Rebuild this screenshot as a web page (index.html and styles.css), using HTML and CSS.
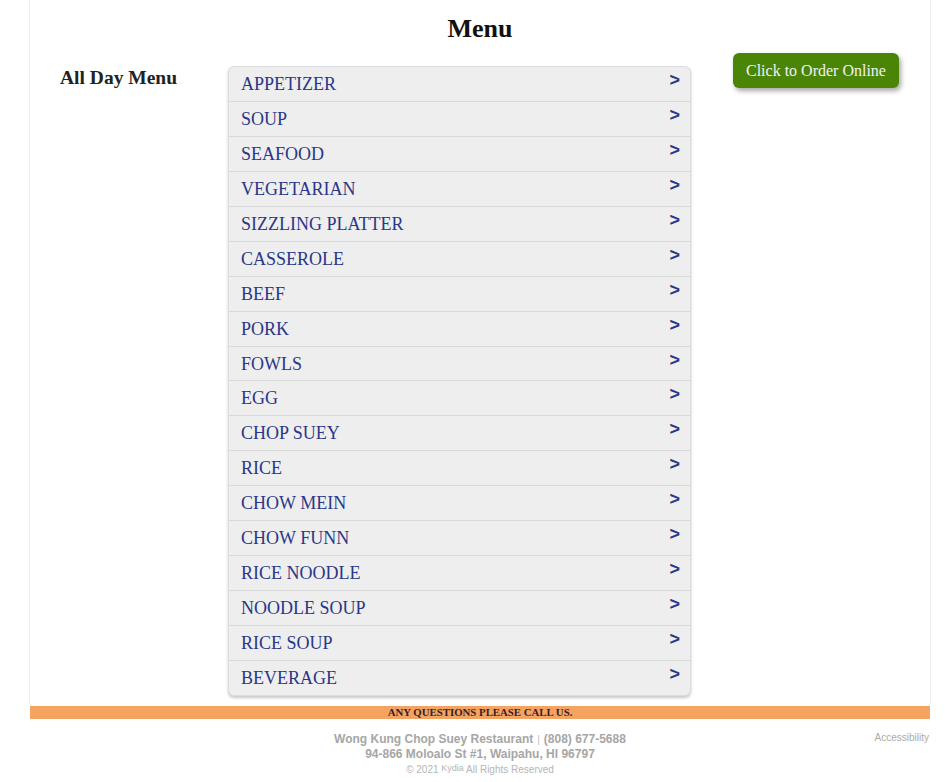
FILE: index.html
```html
<!DOCTYPE html>
<html>
<head>
<meta charset="utf-8">
<link rel="stylesheet" href="styles.css">
</head>
<body>
<div class="page">
  <h1 class="title">Menu</h1>
  <div class="main">
    <h2 class="side-title">All Day Menu</h2>
    <ul class="menu-list">
      <li class="menu-item"><span class="name">APPETIZER</span><span class="arrow">&gt;</span></li>
      <li class="menu-item"><span class="name">SOUP</span><span class="arrow">&gt;</span></li>
      <li class="menu-item"><span class="name">SEAFOOD</span><span class="arrow">&gt;</span></li>
      <li class="menu-item"><span class="name">VEGETARIAN</span><span class="arrow">&gt;</span></li>
      <li class="menu-item"><span class="name">SIZZLING PLATTER</span><span class="arrow">&gt;</span></li>
      <li class="menu-item"><span class="name">CASSEROLE</span><span class="arrow">&gt;</span></li>
      <li class="menu-item"><span class="name">BEEF</span><span class="arrow">&gt;</span></li>
      <li class="menu-item"><span class="name">PORK</span><span class="arrow">&gt;</span></li>
      <li class="menu-item"><span class="name">FOWLS</span><span class="arrow">&gt;</span></li>
      <li class="menu-item"><span class="name">EGG</span><span class="arrow">&gt;</span></li>
      <li class="menu-item"><span class="name">CHOP SUEY</span><span class="arrow">&gt;</span></li>
      <li class="menu-item"><span class="name">RICE</span><span class="arrow">&gt;</span></li>
      <li class="menu-item"><span class="name">CHOW MEIN</span><span class="arrow">&gt;</span></li>
      <li class="menu-item"><span class="name">CHOW FUNN</span><span class="arrow">&gt;</span></li>
      <li class="menu-item"><span class="name">RICE NOODLE</span><span class="arrow">&gt;</span></li>
      <li class="menu-item"><span class="name">NOODLE SOUP</span><span class="arrow">&gt;</span></li>
      <li class="menu-item"><span class="name">RICE SOUP</span><span class="arrow">&gt;</span></li>
      <li class="menu-item"><span class="name">BEVERAGE</span><span class="arrow">&gt;</span></li>
    </ul>
    <div class="order-col">
      <a class="order-btn" href="#">Click to Order Online</a>
    </div>
  </div>
</div>
<div class="notice">ANY QUESTIONS PLEASE CALL US.</div>
<footer class="footer">
  <div class="footer-spacer"></div>
  <div class="footer-info">
    <div class="line1"><span>Wong Kung Chop Suey Restaurant</span><span class="sep">|</span><span>(808) 677-5688</span></div>
    <div class="line2">94-866 Moloalo St #1, Waipahu, HI 96797</div>
    <div class="line3">© 2021 <span class="brand">Kydia</span> All Rights Reserved</div>
  </div>
  <div class="access">Accessibility</div>
</footer>
</body>
</html>
```
FILE: styles.css
```css
html, body {
  margin: 0;
  padding: 0;
  background: #fff;
}
body {
  font-family: "Liberation Serif", "Times New Roman", serif;
  color: #222;
}
.page {
  margin-left: 29px;
  width: 900px;
  border-left: 1px solid #eeeeee;
  border-right: 1px solid #eeeeee;
  padding: 14px 0 8px;
}
.title {
  margin: 0;
  font-size: 26px;
  line-height: 30px;
  text-align: center;
  font-weight: bold;
  color: #111;
}
.main {
  display: grid;
  grid-template-columns: 168px 463px 1fr;
  margin-top: 9px;
  padding-left: 30px;
}
.side-title {
  margin: 13px 0 0;
  font-size: 19.5px;
  line-height: 23px;
  font-weight: bold;
  color: #222;
}
.menu-list {
  list-style: none;
  margin: 13px 0 0;
  padding: 0;
  background: #eeeeee;
  border: 1px solid #dcdcdc;
  border-radius: 6px;
  box-shadow: 0 2px 3px rgba(0,0,0,0.22);
}
.menu-item {
  display: flex;
  justify-content: space-between;
  align-items: flex-start;
  height: 33.94px;
  border-bottom: 1px solid #d8d8d8;
  padding: 0 10px 0 12px;
}
.menu-item:last-child {
  border-bottom: none;
}
.name {
  font-size: 18px;
  line-height: 34px;
  color: #2a3789;
}
.arrow {
  font-family: "Liberation Sans", Arial, sans-serif;
  font-weight: bold;
  font-size: 18px;
  line-height: 26px;
  color: #2a3789;
}
.order-col {
  padding-left: 42px;
}
.order-btn {
  display: inline-block;
  background: #4a8506;
  color: #f2f2f2;
  font-size: 16px;
  line-height: 35px;
  height: 35px;
  padding: 0 13px;
  border-radius: 6px;
  text-decoration: none;
  box-shadow: 2px 3px 5px rgba(0,0,0,0.35);
}
.notice {
  margin: 2px 0 0 30px;
  width: 900px;
  height: 13px;
  background: #f4a460;
  text-align: center;
  font-size: 10.8px;
  line-height: 13px;
  font-weight: bold;
  color: #3a1c2c;
}
.footer {
  display: grid;
  grid-template-columns: 1fr auto 1fr;
  margin-left: 30px;
  width: 900px;
  padding-top: 13px;
  font-family: "Liberation Sans", Arial, sans-serif;
  color: #a6a6a6;
}
.footer-info {
  text-align: center;
}
.line1, .line2 {
  font-size: 12px;
  line-height: 14px;
  font-weight: bold;
}
.sep {
  font-weight: normal;
  font-size: 10px;
  margin: 0 4px;
  color: #bbb;
}
.line3 {
  font-size: 10px;
  line-height: 15px;
  color: #b5b5b5;
}
.brand {
  font-size: 9px;
  vertical-align: 2px;
}
.access {
  justify-self: end;
  font-size: 10px;
  line-height: 12px;
  color: #aaaaaa;
  margin-right: 1px;
}
```
